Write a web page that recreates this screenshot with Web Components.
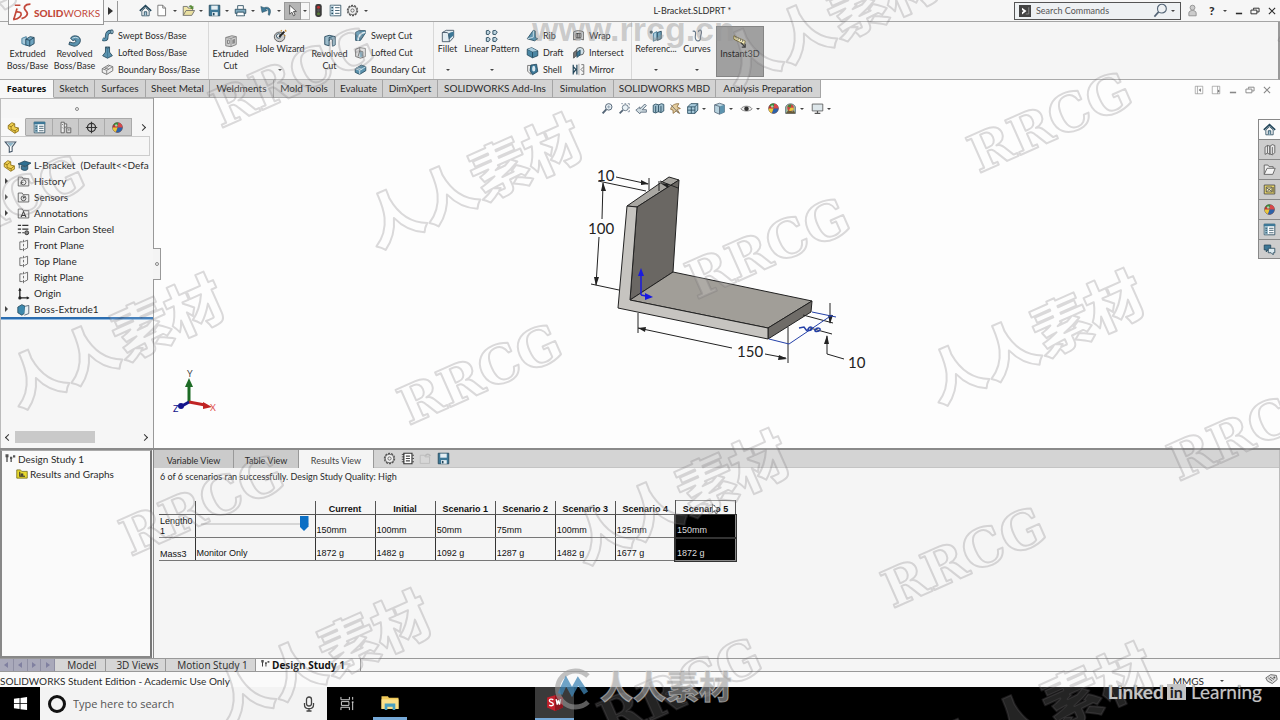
<!DOCTYPE html>
<html lang="en">
<head>
<meta charset="utf-8">
<title>L-Bracket.SLDPRT - SOLIDWORKS</title>
<style>
html,body{margin:0;height:100%}
body{font-family:Lato,"Noto Sans CJK SC",sans-serif;font-size:10px;color:#2b2b2b;background:#f5f5f5}
</style>
</head>
<body>
<sw-app></sw-app>
<script>
const BASE=`*{box-sizing:border-box}button{font:inherit;color:inherit;background:none;border:0;padding:0;margin:0}sw-icon{flex:none}`;
function define(name,css,html){
  const t=document.createElement('template');
  t.innerHTML=`<style>${BASE}${css}</style>${html}`;
  customElements.define(name,class extends HTMLElement{
    constructor(){super();this.attachShadow({mode:'open'}).append(t.content.cloneNode(true));}
  });
}

/* ---------- icons, all on a 16 unit grid ---------- */
const B='#3d7897',D='#23465a',L='#a9cbdc',G='#666';
const ball='<circle cx="8" cy="8" r="6" fill="#c33" stroke="#444" stroke-width=".8"/><path d="M8 8L3 4A6 6 0 0 1 9 2z" fill="#3a8a3a"/><path d="M8 8L9 2A6 6 0 0 1 14 8z" fill="#d8484a"/><path d="M8 8H14A6 6 0 0 1 6 13.6z" fill="#2c62a8"/><path d="M8 8L6 13.6A6 6 0 0 1 2 8z" fill="#e8c93c"/><circle cx="6.4" cy="5.4" r="1.5" fill="#fff" opacity=".6"/>';
const folder=`<path d="M1.500 13.500v-11h5l1 2h7v9z" fill="#eee" stroke="#555"/>`;
const plane=`<path d="M7 3.500H3.500v9.500H7M9 3l4-1.500v9.500L9 13" fill="none" stroke="#555"/><path d="M8 1v3M8 6v3M8 11v4" fill="none" stroke="#555"/>`;
const ICONS={
home:`<path d="M1 8.500L8 2l7 6.500" fill="none" stroke="${D}" stroke-width="2"/><path d="M3.500 8.500V14.500h9V8.500L8 4.500z" fill="#f5f5f5" stroke="${D}"/><path d="M6.500 14V9.500h3V14" fill="${L}" stroke="${D}"/>`,
page:`<path d="M3.500 1.500h6l3.500 3.500v9.500h-9.500z" fill="#fff" stroke="#666"/><path d="M9.500 1.500V5H13" fill="none" stroke="#666"/>`,
open:`<path d="M1.500 14V3h5l1 2H13v3" fill="#f0e6a8" stroke="#666"/><path d="M1.500 14L5 8h10.500L12 14z" fill="#e9dfa0" stroke="#666"/><path d="M8 4c1-3 4-3 5-1l1-1v4h-4l1-1c-1-2-2-2-3-1z" fill="#5a8c3a"/>`,
save:`<path d="M1.500 1.500h13v13h-13z" fill="${B}" stroke="${D}"/><path d="M4 2h8v5H4z" fill="#e4eef3"/><path d="M5 10h7v4.500H5z" fill="#e4eef3"/><path d="M6 11h2v3H6z" fill="${D}"/>`,
print:`<path d="M4.500 6V2h7v4" fill="#fff" stroke="${D}"/><path d="M1.500 6.500h13v5h-13z" fill="#7fa9bd" stroke="${D}"/><path d="M4 10h8l1 4.500H3z" fill="#fff" stroke="${D}"/>`,
undo:`<path d="M1 3l1.500 7.500L9 8 6.500 6.500C9 5 11.500 7 10 13l1.500 1C15 8 12 2 5 4.500z" fill="${B}" stroke="${D}" stroke-width=".6"/>`,
cursor:`<path d="M4.500 1.500v11l2.700-2.500 2 4.500 2-1-2-4.300h3.600z" fill="#fff" stroke="#444"/>`,
traffic:`<rect x="4" y="0" width="8" height="16" rx="3" fill="#3b3b3b"/><circle cx="8" cy="4" r="1.900" fill="#b33"/><circle cx="8" cy="8" r="1.700" fill="#555"/><circle cx="8" cy="12" r="1.900" fill="#587a3a"/>`,
list:`<path d="M1.500 1.500h13v13h-13z" fill="#fff" stroke="${D}"/><path d="M2 2h4v12H2z" fill="#b8d2df"/><path d="M3 4.500h2M3 8h2M3 11.500h2" stroke="${D}" stroke-width="1.500"/><path d="M7.500 4.500H13M7.500 8H13M7.500 11.500H13" stroke="${D}"/>`,
tlist:`<path d="M1.500 1.500h13v13h-13z" fill="#fff" stroke="${D}"/><path d="M1 1h14v3H1z" fill="${B}"/><path d="M2 4h4v10H2z" fill="#8fb6c8"/><path d="M3 6.500h2M3 9h2M3 12h2M7.500 6.500H13M7.500 9H13M7.500 12H13" stroke="${D}"/>`,
gear:`<circle cx="8" cy="8" r="6.200" fill="none" stroke="#555" stroke-width="1.600" stroke-dasharray="2.600 1.200"/><circle cx="8" cy="8" r="5" fill="#f2f2f2" stroke="#555"/><circle cx="8" cy="8" r="2" fill="none" stroke="#555"/>`,
extrude:`<path d="M1 5l5-2v10l-5-2z" fill="${L}" stroke="${B}"/><path d="M5.500 6l5-3 4.500 1v7l-5 3-4.500-1.500z" fill="#6ea4bf" stroke="${D}"/><path d="M5.500 6l4.500 1.200 5-3.200M10 7.200V14" fill="none" stroke="${D}"/>`,
revolve:`<path d="M3 5c1-4 10-4 11 1 1 4-3 8-7 8l-6-2 1-3c4 2 7 1 7-1s-3-1-3 0z" fill="#5c93ae" stroke="${D}"/><path d="M5 5c2-1.500 5-1.500 7 0" fill="none" stroke="#d4e6ee"/>`,
sweep:`<path d="M2 12.500c5 1.500 5-1 5-4s2-6 7-5" fill="none" stroke="${D}" stroke-width="4.500"/><path d="M2 12.500c5 1.500 5-1 5-4s2-6 7-5" fill="none" stroke="#5c93ae" stroke-width="2.800"/><ellipse cx="13.500" cy="3.500" rx="1.500" ry="2.500" fill="${L}" stroke="${D}"/>`,
loft:`<path d="M5.500 1.500h5v6L14 12l-6 3-6-3 3.500-4.500z" fill="#5c93ae" stroke="${D}"/><path d="M5.500 1.500L8 3l2.500-1.500z" fill="${L}" stroke="${D}"/><path d="M8 3v12" fill="none" stroke="#3d7897"/>`,
boundary:`<path d="M1.500 7L9 2.500l5.500 2v5L7 14l-5.500-2.500z" fill="#eee" stroke="#666"/><path d="M1.500 7L7 9l7.500-4.500M7 9v5M4 5.500l6 2.500M11 3l-7 5" fill="none" stroke="#777"/>`,
boundaryb:`<path d="M1.500 7L9 2.500l5.500 2v5L7 14l-5.500-2.500z" fill="#5c93ae" stroke="${D}"/><path d="M1.500 7L7 9l7.500-4.500M7 9v5M4 6l6 2" fill="none" stroke="#dceaf0"/>`,
cut:`<path d="M2 4l7-2 5 1v9l-6 2.500-6-1z" fill="#d3d3d3" stroke="#777"/><path d="M2 4l6 1 6-2M8 5v9.500" fill="none" stroke="#888"/><path d="M9.500 6.500l3-1v5l-3 1z" fill="#888"/><path d="M4 7h2v4H4z" fill="#eee" stroke="#777"/>`,
hole:`<ellipse cx="7.500" cy="9" rx="6" ry="5.500" fill="#ccc" stroke="#555"/><ellipse cx="6.500" cy="8" rx="2.500" ry="2.500" fill="#fff" stroke="${D}"/><path d="M7 9l6-6" stroke="#222" stroke-width="2.200"/><path d="M9 1.500l1 1M13 7l1 1M14 1l1 2" stroke="#c78a2a" stroke-width="1.500"/>`,
rcut:`<path d="M2 3l5-1.500 7 1.500v9.500L11 14V8c0-3-4-3-4 0v5.500L2 12z" fill="#9dbccb" stroke="${D}"/><path d="M7 8V4l4-1" fill="none" stroke="${D}"/>`,
scut:`<path d="M2 4l4-2h8v3L8 14H2z" fill="#5c93ae" stroke="${D}"/><path d="M5 14C5 8 8 5 14 4" fill="none" stroke="#e4eff4" stroke-width="2"/>`,
lcut:`<path d="M2 4l5-2 7 1v10l-6 2-6-2z" fill="#ddd" stroke="#666"/><path d="M7 6l4 1v6l-4 1z" fill="#8fb6c8"/><path d="M7 2v4l-2 7M7 6l4 1v6" fill="none" stroke="#666"/>`,
fillet:`<path d="M1.500 4L6 1.500h8.500v8L10 14.500H1.500z" fill="#e2ecf1" stroke="#456"/><path d="M8 7c0-2 2-3.500 6.500-4v4L9 12z" fill="${B}"/><path d="M1.500 4H7c2 1 2.500 3 2.500 10.500" fill="none" stroke="#456"/>`,
pattern:`<g fill="#bcd2dd" stroke="${D}"><path d="M1.500 2L4 1.500 6 3.500 4 6.500 1.500 6zM9 2l3-.5 2 2-2 3L9 6zM1.500 10l2.500-.5 2 2-2 3-2.500-.5zM9 10l3-.5 2 2-2 3L9 14z"/></g>`,
rib:`<path d="M1.500 12L9 1.500l2.500 1v8l3 1.500-4 2.500z" fill="#5c93ae" stroke="${D}"/><path d="M9 2v8l-7 2" fill="none" stroke="#dceaf0"/>`,
draft:`<path d="M1.500 4L7 2l7.500 4v6L8 14.500 1.500 11z" fill="#4a86a3" stroke="${D}"/><path d="M1.500 4L8 7l6.500-1M8 7v7.500" fill="none" stroke="${D}"/><path d="M2 4l5-2 7 4-6 1z" fill="${L}"/>`,
shell:`<path d="M2 3h4v11L2 10z" fill="#eee" stroke="#666"/><path d="M6 2.500l7-1 1.500 9L8 14.500 5 9z" fill="${B}" stroke="${D}"/><ellipse cx="9.500" cy="7" rx="2" ry="3.500" fill="#d9e8ef"/>`,
wrap:`<path d="M2 3.500c4-2 8-2 12 0v10c-4-2-8-2-12 0z" fill="#ddd" stroke="#555"/><path d="M5 5.500h6v5H5z" fill="none" stroke="#333"/><path d="M7 5v6M9 5v6" stroke="#333"/>`,
intersect:`<circle cx="10" cy="6.500" r="4.800" fill="#cfdfe7" stroke="#555"/><path d="M2 8l4-3v6l-4 4z" fill="#777" stroke="#444"/><path d="M6 8l4-3v6l-4 3z" fill="${B}" stroke="${D}"/>`,
mirror:`<path d="M1.500 2v12M1.500 4.500L5 8l-3.500 4M6 2v12" fill="none" stroke="${D}" stroke-width="1.500"/><path d="M8.500 1v14" stroke="#999"/><path d="M14.500 2v12h-3M14.500 2h-3M14 5l-3 3 3 3" fill="none" stroke="#777" stroke-width="1.200"/>`,
ref:`<path d="M5 5l4-2v9l-4 2z" fill="${L}" stroke="${B}"/><path d="M9.500 4L14 2.500V11l-4.500 2z" fill="#6ea4bf" stroke="${D}"/><circle cx="2.500" cy="3.500" r="1.800" fill="${D}"/>`,
curves:`<path d="M3 2.500c5-1 3 4 3 7 0 6 7 5 6 0-1-2 2-3 1-7-1-2-4-1-3 1" fill="none" stroke="#678" stroke-width="1.300"/>`,
instant:`<path d="M1 2l13 6-1 4L1 6z" fill="#f1e7ae" stroke="#6b6030"/><path d="M3.500 3v2M6 4v2.500M8.500 5.500V8M11 6.500V9" stroke="#555"/><path d="M9 10l5 5M14 11v4h-4" fill="none" stroke="#222" stroke-width="1.300"/>`,
zoomfit:`<circle cx="9.500" cy="6" r="4" fill="#eaf2f6" stroke="#567" stroke-width="1.200"/><path d="M6.500 9L2 14" stroke="#567" stroke-width="2.400"/><path d="M7.500 6h4M9.500 4v4" stroke="#89a"/>`,
zoomarea:`<path d="M4 2h2M8 2h2M12 2h2v2M14 6v2M14 10v2h-2" fill="none" stroke="#789"/><circle cx="9" cy="7" r="3.700" fill="#eaf2f6" stroke="#567"/><path d="M6 10l-4 4" stroke="#567" stroke-width="2.200"/>`,
prev:`<path d="M1 10l5-4v2.500l6-6 2 2-5 5h5v3H7l-1 2z" fill="#cfdbe1" stroke="#567"/>`,
section:`<path d="M1.500 4l3-1.500 4 1 3-1.500 3 1v8l-3 2-4-1-3 1.500-3-1z" fill="#9dbccb" stroke="${D}"/><path d="M4.500 5v8M8 4v8M11 5v8" stroke="${D}"/>`,
orient:`<path d="M2 9c1-5 5-7 10-7l-2 4 4 2-4 1 3 5-4-3-4 3v-4z" fill="#e6cfa0" stroke="#8a6a3a"/><path d="M2 3l10 11" stroke="#666"/>`,
cube:`<path d="M2 6l4-4h8.500v8L11 14H2z" fill="#a9cbdc" stroke="${D}"/><path d="M2 6h9l3.500-4M11 6v8M6.500 6v8M2 10h9" fill="none" stroke="${D}"/>`,
shade:`<path d="M2 3.500L8 1.500l6 2v9l-6 2.500-6-2.500z" fill="#b9d3df" stroke="#567"/><path d="M8 5.500l6-2v9L8 15z" fill="#5c93ae"/><path d="M2 3.500l6 2v9.500" fill="none" stroke="#567"/>`,
eye:`<path d="M1 8.500C4 4 12 4 15 8.500 12 12 4 12 1 8.500z" fill="#eee" stroke="#777"/><circle cx="8" cy="8.300" r="2.800" fill="#333"/>`,
ball, ballbg:`<path d="M2 14V6c2-5 10-5 12 0v8z" fill="#9fc1a0" stroke="#567"/><path d="M2 14l5-6 3 4 2-2 2 4z" fill="#6a5a3a"/><circle cx="8" cy="7" r="4" fill="#c44"/><path d="M8 7L4.500 5.500A4 4 0 0 1 9 3.200z" fill="#3a8a3a"/><path d="M8 7h4A4 4 0 0 1 6 10.500z" fill="#e8c93c"/>`,
monitor:`<path d="M1.500 2.500h13v8.500h-13z" fill="#dde6ea" stroke="#555"/><path d="M8 11v3M4.500 14h7" stroke="#555" stroke-width="1.500"/>`,
books:`<path d="M2.500 5l3-2v9.500l-3 1.500zM5.500 3l3 .8V14l-3-1.500M8.500 4l3-2 3 1v9l-3 2.500-3-1z" fill="#e8e8e8" stroke="#555"/><path d="M11.500 5v9" stroke="#555"/>`,
ofolder:`<path d="M1.500 14V2.500h4.500l1.500 2h5v2" fill="#eee" stroke="#555"/><path d="M1.500 14L5 6.500h10L12 14z" fill="#f4f4f4" stroke="#555"/>`,
palette:`<path d="M1.500 2.500h13v11h-13z" fill="#e8d56a" stroke="#444"/><path d="M4 5h7v6H4z" fill="#fff7b8" stroke="#444"/><path d="M4.500 6l6 4M10 5.500l-5 5M12.500 5v7" stroke="#444"/>`,
forum:`<path d="M1.500 2.500h8v6H6l-2 2.500V8.500H1.500z" fill="${B}" stroke="${D}"/><path d="M6.500 6.500h8v5.500h-2v2.500L10 12H6.500z" fill="#dceaf0" stroke="${D}"/>`,
part:`<path d="M1.500 5.500L6 2l3.500 1.500v4l4.500 1v4L9.500 15 1.500 9.500z" fill="#f0d050" stroke="#8a6d13"/><path d="M1.500 5.500L5 7l4.500-3.500M5 7v3.500l5 1.500 4-3.500M10 12v3" fill="none" stroke="#8a6d13"/>`,
config:`<path d="M2.500 1.500h4v13h-4zM6.500 3.500h3v4h-3" fill="#eee" stroke="#555"/><path d="M9.500 8.500h5v6h-5z" fill="#ddd" stroke="#555"/><path d="M4 4l1 1M4 8l1 1M11 11h2" stroke="#444"/>`,
target:`<circle cx="8" cy="8" r="5" fill="none" stroke="#333" stroke-width="1.600"/><path d="M8 1v14M1 8h14" stroke="#333" stroke-width="1.400"/>`,
funnel:`<path d="M1.500 2.500h13L10 8.500v5.500L6.500 15V8.500z" fill="#fff" stroke="#456" stroke-width="1.300"/><path d="M3.500 3.500h9L8 8z" fill="#8fb6c8"/>`,
cap:`<path d="M0 6l8-3.500L16 5l-7 4z" fill="#2d6f92" stroke="${D}"/><path d="M4 8.500v4c3 2 6 2 8 0v-5l-3 2z" fill="${B}" stroke="${D}"/><path d="M1.500 6.500v5" stroke="${D}"/>`,
history:folder+`<circle cx="8" cy="9" r="3" fill="none" stroke="#444"/><path d="M5 12V9h3" fill="none" stroke="#444"/>`,
sensors:folder+`<circle cx="8" cy="9" r="3" fill="#ddd" stroke="#444"/><path d="M8 9l2-2M8 7v2" stroke="#333"/>`,
annot:folder+`<path d="M5 12.500L8 5.500l3 7M6 10.500h4" fill="none" stroke="#333" stroke-width="1.300"/>`,
steel:`<path d="M1 3h4M6.500 3H14M1 7.500h4M6.500 7.500H14M1 12h4M6.500 12H9" stroke="#333" stroke-width="1.500"/><circle cx="12" cy="12" r="2.400" fill="#888" stroke="#222"/>`,
plane,
origin:`<path d="M3.500 2v11.500H14" fill="none" stroke="#222" stroke-width="1.600"/><path d="M3.500 1L1.500 4.500h4zM15.500 13.500L12 11.500v4z" fill="#222"/><circle cx="3.500" cy="13.500" r="2" fill="#222"/>`,
boss:`<path d="M1 5l5-3 4 2v8l-4 3-5-3z" fill="#3d88ad" stroke="${D}"/><path d="M10 4l4.500-1v10L9 15" fill="#e8f0f4" stroke="#456"/>`,
study:`<path d="M2 1.500h4v4H2zM8 5h3v3H8zM12 3h3v3h-3z" fill="#555"/><path d="M4 5v7M9.500 8v4" stroke="#333" stroke-width="1.500"/>`,
results:`<path d="M1 13.500v-11h5l1.500 2H15v9z" fill="#e8d92e" stroke="#6b6410"/><path d="M5 5v6h7M7 11V8h2v3" fill="none" stroke="#333" stroke-width="1.400"/>`,
notes:`<path d="M3.500 1.500h10v13h-10z" fill="#fff" stroke="#333" stroke-width="1.400"/><path d="M6 5h5M6 8h5M6 11h5" stroke="#444" stroke-width="1.500"/><path d="M1 3h3M1 6h3M1 9h3M1 12h3M14 4h2M14 8h2M14 12h2" stroke="#333"/>`,
faded:`<g opacity=".35"><path d="M1.500 14V4h5l1 2H13v8z" fill="#ddd" stroke="#888"/><path d="M8 5c1-3 4-3 6 0" fill="none" stroke="#888" stroke-width="2"/></g>`,
cmd:`<path d="M0 0h16v16H0z" fill="#444"/><path d="M4 3.500L10 8l-6 4.500V9.500L6 8 4 6.500z" fill="#fff"/><path d="M9 12h4V3" stroke="#999" fill="none"/>`,
lens:`<circle cx="9.500" cy="6" r="4.700" fill="none" stroke="#567" stroke-width="1.200"/><path d="M6 9.500L1.500 14.500" stroke="#567" stroke-width="1.800"/>`,
user:`<circle cx="8" cy="4.500" r="3" fill="#ccc" stroke="#888"/><path d="M3.500 14.500V11c0-4 9-4 9 0v3.500z" fill="#ccc" stroke="#888"/>`,
min:`<path d="M3 12h10" stroke="currentColor" stroke-width="2.500"/>`,
restore:`<path d="M5.500 6V3.500h9v6H11M1.500 6.500h9.500v6H1.500z" fill="none" stroke="currentColor" stroke-width="1.500"/>`,
close:`<path d="M3 3l10 10M13 3L3 13" stroke="currentColor" stroke-width="1.700"/>`,
dockl:`<path d="M2 2h12v12H2z" fill="none" stroke="#888"/><path d="M5.500 2v12" stroke="#888"/><path d="M11 5L7.500 8l3.500 3z" fill="#777"/>`,
dockr:`<path d="M2 2h12v12H2z" fill="none" stroke="#888"/><path d="M10.500 2v12" stroke="#888"/><path d="M11 7l3 2.500-3 3z" fill="#777"/>`,
tag:`<path d="M1 6l6-4 7 1 1 5-6 5-6-3z" fill="#ddd" stroke="#555"/><path d="M4 6l5 4M6 5l5 3" stroke="#555"/><circle cx="11.500" cy="5.500" r="1.200" fill="#555"/>`,
win:`<path d="M1 3l6-.9V7.600H1zM8 2l7-1v6.600H8zM1 8.500h6v5.400L1 13zM8 8.500h7V15l-7-1z" fill="#fff"/>`,
mic:`<rect x="5.500" y="1" width="5" height="9" rx="2.500" fill="none" stroke="#444" stroke-width="1.300"/><path d="M3.500 7v2c0 5 9 5 9 0V7M8 12.500V15M5.500 15h5" fill="none" stroke="#444" stroke-width="1.300"/>`,
taskview:`<path d="M1 1v3h9V1M1 15v-3h9v3M1.500 6h8v4h-8zM13.500 1v3M13.500 6v9M12.500 6.500h2" fill="none" stroke="#ddd"/>`,
explorer:`<path d="M0 2h6l1 1.500h9V14H0z" fill="#f0c95a"/><path d="M0 5h16v9H0z" fill="#fbe08a"/><path d="M3 9h10v6h-2.500v-3h-5v3H3z" fill="#49a0c0"/>`,
swapp:`<path d="M1 3l7-2 7 2v9l-7 3-7-3z" fill="#c4202c"/><path d="M8 1l7 2v9l-7 3z" fill="#8d1620"/><path d="M6.500 5.200C5 4 3 4.500 3 6s3.500 1.500 3.500 3-2 2-3.700.8M9 4.500l1 5 1-4 1 4 1-5" fill="none" stroke="#fff" stroke-width="1.200"/>`
};
customElements.define('sw-icon',class extends HTMLElement{
  connectedCallback(){
    if(this.shadowRoot)return;
    this.attachShadow({mode:'open'}).innerHTML=`<style>:host{display:block;width:13px;height:13px}svg{display:block;width:100%;height:100%}</style><svg viewBox="0 0 16 16" aria-hidden="true">${ICONS[this.getAttribute('name')]||''}</svg>`;
  }
});
define('sw-caret',`:host{display:flex;width:10px;justify-content:center;align-items:center;flex:none}i{border:2px solid transparent;border-top-color:#444;border-bottom:0}`,`<i></i>`);

/* ---------- title bar ---------- */
define('sw-titlebar',`
:host{display:flex;height:22px;background:#f6f6f6;border-bottom:1px solid #a5a5a5;align-items:center;position:relative;z-index:2}
.left{display:flex;align-items:center;width:371px;height:22px;flex:none}
.logo{display:flex;align-items:center;gap:2px;width:96px;height:25px;margin:0 0 0 8px;align-self:flex-start;background:#fbfbfb;border:1px solid #999;border-top:0;padding:2px 2px 0;color:#c2483a;font-size:10px}
.logo b{font-weight:900}.logo svg{width:21px;height:19px;flex:none}
.play{width:14px;height:20px;margin-right:19px;border-right:1px solid #999;display:flex;align-items:center;justify-content:center;flex:none}
.play i{border:4px solid transparent;border-left:5px solid #333;border-right:0}
.t{width:16px;height:18px;display:flex;justify-content:center;align-items:center;flex:none}
.t sw-icon{width:13px;height:13px}
.sel{width:17px;background:#b5b5b5;border:1px solid #999}
.selc{height:18px;border:1px solid #bbb;border-left:0;width:9px}
.w17{width:17px}
.title{flex:1;text-align:center;font-size:9px}
.right{display:flex;align-items:center;width:266px;flex:none}
form{display:flex;align-items:center;width:168px;height:18px;border:1px solid #555;background:#eef1f3;padding:0 2px 0 4px;margin:0}
form sw-icon{width:12px;height:12px}form .lens{width:15px;height:15px}
input{flex:1;min-width:0;border:0;background:none;outline:0;font:9px Lato,sans-serif;color:#444;padding:0 5px}
input::placeholder{color:#555;opacity:1}
.q{width:18px;text-align:center;font-weight:900;font-size:12px}
.w{width:17px;display:flex;justify-content:center}.w sw-icon{width:10px;height:10px}`,
`<div class="left"><div class="logo"><svg viewBox="0 0 18 17" fill="none" stroke="#c2483a" stroke-width="1.500"><path d="M3 2l5 0M1.500 15c6-1 8-4 7-6-1-1.500-3-1-4.500-1M5 5L2 15M17 1c-5 0-7 3-4 6 3 3 0 6-4 7"/></svg><span><b>SOLID</b>WORKS</span></div>
<button class="play" aria-label="Show menus"><i></i></button>
<button class="t" aria-label="Home"><sw-icon name="home"></sw-icon></button>
<button class="t w17" aria-label="New"><sw-icon name="page"></sw-icon></button><sw-caret></sw-caret>
<button class="t" aria-label="Open"><sw-icon name="open"></sw-icon></button><sw-caret></sw-caret>
<button class="t" aria-label="Save"><sw-icon name="save"></sw-icon></button><sw-caret></sw-caret>
<button class="t" aria-label="Print"><sw-icon name="print"></sw-icon></button><sw-caret></sw-caret>
<button class="t" aria-label="Undo"><sw-icon name="undo"></sw-icon></button><sw-caret></sw-caret>
<button class="t sel" aria-label="Select"><sw-icon name="cursor"></sw-icon></button><sw-caret class="selc"></sw-caret>
<button class="t w17" aria-label="Rebuild"><sw-icon name="traffic"></sw-icon></button>
<button class="t w17" aria-label="File properties"><sw-icon name="list"></sw-icon></button>
<button class="t w17" aria-label="Options"><sw-icon name="gear"></sw-icon></button><sw-caret></sw-caret></div>
<div class="title">L-Bracket.SLDPRT *</div>
<div class="right"><form><sw-icon name="cmd"></sw-icon><input type="text" aria-label="Search Commands" placeholder="Search Commands"><sw-icon class="lens" name="lens"></sw-icon><sw-caret></sw-caret></form>
<button class="t w17" style="width:22px" aria-label="Account"><sw-icon name="user"></sw-icon></button><button class="q">?</button><sw-caret></sw-caret>
<button class="w" aria-label="Minimize"><sw-icon name="min"></sw-icon></button><button class="w" aria-label="Restore"><sw-icon name="restore"></sw-icon></button><button class="w" aria-label="Close"><sw-icon name="close"></sw-icon></button></div>`);

/* ---------- ribbon ---------- */
define('sw-big',`:host{display:block;width:47px;flex:none}
button{display:flex;flex-direction:column;align-items:center;width:100%;height:100%;padding-top:12px;line-height:12px;font-size:9px;text-align:center;white-space:nowrap}
:host([menu]) button{padding-top:7px}
sw-caret{display:none}:host([menu]) sw-caret{display:flex;margin-top:14px}
::slotted(sw-icon){width:14px;height:14px}`,
`<button><slot name="icon"></slot><slot></slot><sw-caret></sw-caret></button>`);
define('sw-small',`:host{display:block}button{display:flex;align-items:center;gap:4px;height:17px;font-size:9px;white-space:nowrap}`,
`<button><slot name="icon"></slot><span><slot></slot></span></button>`);
const big=(ic,label,w,menu='')=>`<sw-big style="width:${w}px" ${menu}><sw-icon slot="icon" name="${ic}"></sw-icon><span>${label}</span></sw-big>`;
const small=(ic,label)=>`<sw-small><sw-icon slot="icon" name="${ic}"></sw-icon>${label}</sw-small>`;
define('sw-ribbon',`:host{display:flex;height:58px;background:#f5f5f5;border-bottom:1px solid #aaa;border-right:2px solid #999;padding-left:4px}
section{display:flex;border-right:1px solid #d8d8d8;flex:none}
.col{padding:5px 7px 0 3px}.c1{width:110px}.c2{width:82px}.c3{width:46px}.c4{width:62px}
.on{background:#a0a0a0;border:1px solid #858585;margin:4px 0 2px 2px;display:flex}
.on sw-big{margin-top:-5px}
section:last-child{border:0}`,
`<section>${big('extrude','Extruded<br>Boss/Base',47)}${big('revolve','Revolved<br>Boss/Base',47)}
<div class="col c1">${small('sweep','Swept Boss/Base')}${small('loft','Lofted Boss/Base')}${small('boundary','Boundary Boss/Base')}</div></section>
<section>${big('cut','Extruded<br>Cut',43)}${big('hole','Hole Wizard',56,'menu')}${big('rcut','Revolved<br>Cut',43)}
<div class="col c2">${small('scut','Swept Cut')}${small('lcut','Lofted Cut')}${small('boundaryb','Boundary Cut')}</div></section>
<section>${big('fillet','Fillet',27,'menu')}${big('pattern','Linear Pattern',62,'menu')}
<div class="col c3">${small('rib','Rib')}${small('draft','Draft')}${small('shell','Shell')}</div>
<div class="col c4">${small('wrap','Wrap')}${small('intersect','Intersect')}${small('mirror','Mirror')}</div></section>
<section>${big('ref','Referenc...',48,'menu')}${big('curves','Curves',34,'menu')}<div class="on">${big('instant','Instant3D',46)}</div></section>`);

/* ---------- command manager tabs ---------- */
const tabs=[['Features',54],['Sketch',41],['Surfaces',51],['Sheet Metal',64],['Weldments',64],['Mold Tools',61],['Evaluate',48],['DimXpert',55],['SOLIDWORKS Add-Ins',115],['Simulation',61],['SOLIDWORKS MBD',102],['Analysis Preparation',105]];
define('sw-tabs',`:host{display:flex;height:18px;background:#fdfdfd}
nav{display:flex}button{height:18px;background:#d3d3d3;border-right:1px solid #a5a5a5;border-bottom:1px solid #aaa;line-height:17px;white-space:nowrap}
button:first-child{background:#f8f8f8;border-bottom-color:#f8f8f8;font:bold 9px/17px "Open Sans",sans-serif;color:#111}
.win{margin-left:auto;display:flex;align-items:center;padding:2px 5px 0 0;color:#888}
.win i{width:17px;display:flex;justify-content:center}.win sw-icon{width:10px;height:10px}`,
`<nav>${tabs.map(([t,w])=>`<button style="width:${w}px">${t}</button>`).join('')}</nav>
<div class="win">${['dockl','dockr','min','restore','close'].map(n=>`<i><sw-icon name="${n}"></sw-icon></i>`).join('')}</div>`);

/* ---------- feature tree ---------- */
define('sw-node',`:host{display:flex;align-items:center;height:16px;padding-left:4px;white-space:nowrap;overflow:hidden}
i{width:12px;flex:none}i::before{content:"";display:none;border:3px solid transparent;border-left:3px solid #444;border-right:0;width:0}
:host([open]) i::before{display:block}span{padding-left:4px}:host([root]){padding-left:2px}:host([root]) i{display:none}:host([root]) span{padding-left:3px;white-space:pre}`,
`<i></i><slot name="icon"></slot><span><slot></slot></span>`);
const node=(ic,t,a='')=>`<sw-node role="treeitem" ${a}><sw-icon slot="icon" name="${ic}"></sw-icon>${t}</sw-node>`;
define('sw-tree',`:host{display:flex;flex-direction:column;width:154px;flex:none;background:#f6f6f6;border-right:1px solid #999;border-left:1px solid #bbb;position:relative}
.grip{height:20px;display:flex;justify-content:center;align-items:center;border-top:1px solid #bbb}
.dot{width:4px;height:4px;border:1px solid #888;border-radius:50%}
.tabs{display:flex;height:18px}.tabs button{width:27px;background:#cbcbcb;border:1px solid #aaa;border-left:0;display:flex;align-items:center;justify-content:center}
.tabs button:first-child{background:#f8f8f8;border-color:#f8f8f8;border-right-color:#aaa;width:26px}
.tabs button:last-child{background:none;border:0;width:22px}
.ar{width:5px;height:5px;border:solid #333;border-width:1px 1px 0 0;rotate:45deg;flex:none}.ar.l{rotate:-135deg}
.filter{height:20px;border:1px solid #ccc;border-left:0;margin-right:3px;padding:3px;display:flex}
.filter input{border:0;background:none;flex:1;min-width:0;outline:0}
.list{padding-top:1px}.bar{height:3px;background:#2b6db0;border-bottom:1px solid #8fb8e0}
.scroll{margin-top:auto;display:flex;height:12px;align-items:center;margin-bottom:5px;padding:0 6px 0 5px;gap:4px}
.scroll div{width:80px;height:12px;background:#c9c9c9;margin-right:auto}
.split{position:absolute;left:152px;top:150px;width:8px;height:32px;background:#f4f4f4;border:1px solid #999;border-left:0;display:flex;align-items:center;justify-content:center;z-index:1}`,
`<div class="grip"><span class="dot"></span></div>
<div class="tabs"><button aria-label="Feature tree"><sw-icon name="part"></sw-icon></button><button aria-label="Properties"><sw-icon name="tlist"></sw-icon></button><button aria-label="Configurations"><sw-icon name="config"></sw-icon></button><button aria-label="DimXpert"><sw-icon name="target"></sw-icon></button><button aria-label="Display"><sw-icon name="ball"></sw-icon></button><button aria-label="More"><i class="ar"></i></button></div>
<label class="filter"><sw-icon name="funnel"></sw-icon><input type="text" aria-label="Filter tree"></label>
<div class="list" role="tree">
<sw-node root role="treeitem"><sw-icon slot="icon" name="part"></sw-icon><sw-icon slot="icon" name="cap" style="margin-left:2px"></sw-icon>L-Bracket&nbsp; (Default&lt;&lt;Defa</sw-node>
${node('history','History','open')}${node('sensors','Sensors','open')}${node('annot','Annotations','open')}${node('steel','Plain Carbon Steel')}${node('plane','Front Plane')}${node('plane','Top Plane')}${node('plane','Right Plane')}${node('origin','Origin')}${node('boss','Boss-Extrude1','open')}</div>
<div class="bar"></div>
<div class="scroll"><i class="ar l"></i><div></div><i class="ar"></i></div>
<div class="split"><span class="dot"></span></div>`);

/* ---------- graphics area ---------- */
define('sw-view',`:host{display:block;flex:1;min-width:0;position:relative;background:#fdfdfd}
.scene{position:absolute;inset:0;width:100%;height:100%}
.hud{position:relative;display:flex;justify-content:center;align-items:center;height:21px;gap:4px}
.hud span{display:flex;align-items:center}
.side{position:absolute;right:0;top:21px;width:22px;display:flex;flex-direction:column;border:1px solid #888;border-right:0}
.side button{height:20px;background:#cdcdcd;border-bottom:1px solid #888;display:flex;align-items:center;justify-content:center}
.side button:first-child{background:#fbfbfb}.side button:last-child{border:0;height:18px}
text{font-family:Lato,sans-serif}.dim text{font-family:"Liberation Sans Narrow",Lato,sans-serif}`,
`<svg class="scene" viewBox="154 98 1126 350" fill="none">
<g stroke="#222" stroke-width="1" stroke-linejoin="round">
<path d="M627 206L669 177L679 180L637 207z" fill="#a9a7a2"/>
<path d="M637 207L679 180L673 272L630 300z" fill="#6a6763"/>
<path d="M630 300L673 272L812 301L768 328z" fill="#a19e98"/>
<path d="M768 328L812 301L811 312L768 339z" fill="#6f6c68"/>
<path d="M627 206L637 207L630 300L768 328L768 339L618 308z" fill="#c6c4c0"/></g>
<g stroke="#222" stroke-width="1">
<path d="M616 177L648 184M649 178v12M598 181L646 191M660 181L678 188M659 181v10M603 183L602 219M599 237L596 285M591 284L619 290M638 313v20M638 328L732 348M765 354L786 358M788 327v36M803 315l30 8M830 303v20M810 328l22 6M827 336v18l17 5"/></g>
<g fill="#222"><path d="M649 184l-8-4v5zM660 183l9 1-1 4zM603 182l-2 9h5zM596 286l-2-9h5zM638 328l8-1-1 5zM787 359l-8-4-1 5zM830 324l-2-9h5zM827 335l-3 9h5z"/></g>
<g stroke="#2440a8"><path d="M769 339l20 5L832 315M812 312l24 5"/><path d="M799 328l5-1 3 4M808 329c2-3 5-2 4 0s-5 2-4 0M815 330c2-3 6-2 5 0s-6 2-5 0" stroke-width="1.500"/></g>
<g stroke="#1a1ae0" stroke-width="1.500"><path d="M641 295V272M641 295l10 2"/></g><g fill="#1a1ae0"><path d="M641 268l-3 8h6zM653 297l-8-4v7z"/></g>
<g class="dim" fill="#222" font-size="15"><text x="597" y="181">10</text><text x="588" y="234">100</text><text x="737" y="357">150</text><text x="848" y="368">10</text></g>
<path d="M189 403V386" stroke="#1d6b25" stroke-width="3"/><path d="M189 378l-4 9h8z" fill="#1d6b25"/>
<path d="M189 402l16 3" stroke="#c02424" stroke-width="3"/><path d="M212 407l-9-5v7z" fill="#c02424"/>
<path d="M189 402l-7 4" stroke="#15158c" stroke-width="3"/><circle cx="181" cy="406" r="3" fill="#15158c"/>
<g font-size="9"><text x="187" y="377" fill="#444">Y</text><text x="210" y="411" fill="#e05050">X</text><text x="173" y="412" fill="#15158c">Z</text></g>
</svg>
<div class="hud"><sw-icon name="zoomfit"></sw-icon><sw-icon name="zoomarea"></sw-icon><sw-icon name="prev"></sw-icon><sw-icon name="section"></sw-icon><sw-icon name="orient"></sw-icon>
<span><sw-icon name="cube"></sw-icon><sw-caret></sw-caret></span><span><sw-icon name="shade"></sw-icon><sw-caret></sw-caret></span><span><sw-icon name="eye"></sw-icon><sw-caret></sw-caret></span><sw-icon name="ball"></sw-icon><span><sw-icon name="ballbg"></sw-icon><sw-caret></sw-caret></span><span><sw-icon name="monitor"></sw-icon><sw-caret></sw-caret></span></div>
<div class="side">${['home','books','ofolder','palette','ball','tlist','forum'].map(n=>`<button aria-label="${n}"><sw-icon name="${n}"></sw-icon></button>`).join('')}</div>`);

/* ---------- design study ---------- */
const heads=['Current','Initial','Scenario 1','Scenario 2','Scenario 3','Scenario 4','Scenario 5'];
const len=['150mm','100mm','50mm','75mm','100mm','125mm','150mm'],mass=['1872 g','1482 g','1092 g','1287 g','1482 g','1677 g','1872 g'];
define('sw-study',`:host{display:flex;min-height:210px;border-top:2px solid #8a8a8a;background:#f5f5f5;gap:1px}
aside{width:152px;flex:none;background:#fafafa;border:2px solid #888;border-top:1px solid #aaa;border-right-color:#777;padding:0 2px}
aside div{display:flex;align-items:center;height:15px;gap:2px;white-space:nowrap}
aside .kid{padding-left:12px}
aside sw-icon{width:12px;height:12px}
main{flex:1;min-width:0;border-left:1px solid #888;border-right:1px solid #bbb}
.bar{display:flex;height:18px;background:#d4d4d4;align-items:stretch;border-bottom:1px solid #c4c4c4;gap:5px}
.bar nav{display:flex;margin-right:4px}.bar nav button{font-size:9px;border-right:1px solid #999;background:#cbcbcb;padding-top:4px;line-height:14px;margin-bottom:-1px}
.bar nav button:last-child{background:#f5f5f5;color:#444}
.bar>sw-icon{align-self:center}
p{margin:0;padding:3px 6px;font-size:9px;line-height:12px}
table{border-collapse:collapse;table-layout:fixed;width:577px;margin:14px 0 0 5px;font:9px/11px "Liberation Sans",Arial,sans-serif;color:#111}
th,td{border:1px solid #555;padding:0 1px;vertical-align:bottom;text-align:left;overflow:hidden}
tr>:first-child{border-left:0}thead th{border-top:0;height:14px;text-align:center;line-height:10px;vertical-align:bottom}
td,tbody th{height:23px;padding-bottom:1px;font-weight:normal;border-color:#777 #333}
tbody th{line-height:10px}
th.s1,td.s1{border-left:1px solid #000}
thead th:last-child{border-top:1px solid #888;position:relative;overflow:visible}
td:last-child{background:#000;color:#ddd;outline:1px solid #333;border-color:#888}
.ptr{position:absolute;left:33px;top:1px;width:12px;height:14px;z-index:1}
input{appearance:none;-webkit-appearance:none;display:block;width:108px;height:15px;margin:0 4px 5px;background:linear-gradient(#d6d6d6,#d6d6d6) 0 7px/100% 2px no-repeat}
input::-webkit-slider-thumb{-webkit-appearance:none;width:9px;height:15px;background:#0b6fc4;clip-path:polygon(0 0,100% 0,100% 70%,50% 100%,0 70%)}`,
`<aside><div><sw-icon name="study"></sw-icon>Design Study 1</div><div class="kid"><sw-icon name="results"></sw-icon>Results and Graphs</div></aside>
<main><div class="bar"><nav><button style="width:80px">Variable View</button><button style="width:65px">Table View</button><button style="width:75px">Results View</button></nav>
<sw-icon name="gear"></sw-icon><sw-icon name="notes"></sw-icon><sw-icon name="faded"></sw-icon><sw-icon name="save"></sw-icon></div>
<p>6 of 6 scenarios ran successfully. Design Study Quality: High</p>
<table><colgroup><col style="width:36px"><col style="width:120px">${heads.map(()=>'<col>').join('')}</colgroup>
<thead><tr><th></th><th></th>${heads.map((h,i)=>`<th class="${i==2?'s1':''}" scope="col">${h}${i==6?'<sw-icon class="ptr" name="cursor"></sw-icon>':''}</th>`).join('')}</tr></thead>
<tbody><tr><th scope="row">Length0<br>1</th><td><input type="range" min="50" max="150" value="150" step="25" aria-label="Length01"></td>${len.map((v,i)=>`<td class="${i==2?'s1':''}">${v}</td>`).join('')}</tr>
<tr><th scope="row">Mass3</th><td>Monitor Only</td>${mass.map((v,i)=>`<td class="${i==2?'s1':''}">${v}</td>`).join('')}</tr></tbody></table></main>`);

/* ---------- bottom tabs, status bar, taskbar ---------- */
define('sw-bottom',`:host{display:flex;height:14px;border-top:1px solid #999;border-bottom:1px solid #999;font:10px/13px "Open Sans",sans-serif}
.nav{display:flex;width:55px;background:#a9a9ba}.nav i{flex:1;border-right:1px solid #8f8fa4;display:flex;align-items:center;justify-content:center}
.nav i::before{content:"";border:3px solid transparent;border-left:4px solid #8080a0;border-right:0}.nav .b::before{rotate:180deg}
.tab{background:#d6d6d6;border-right:1px solid #999;white-space:nowrap;padding-left:4px}
.on{display:flex;gap:2px;background:#fafafa;font-weight:bold;color:#111}.on sw-icon{width:10px;height:10px}`,
`<div class="nav"><i class="b"></i><i class="b"></i><i></i><i></i></div><button class="tab" style="width:51px">Model</button><button class="tab" style="width:60px">3D Views</button><button class="tab" style="width:90px">Motion Study 1</button><button class="tab on" style="width:105px"><sw-icon name="study"></sw-icon>Design Study 1</button>`);
define('sw-status',`:host{display:flex;height:15px;align-items:center;background:#fafafa;padding-top:3px;line-height:12px}
.u{margin-left:auto;padding-right:13px}sw-caret{margin-right:38px}sw-icon{margin:-3px 2px 0 0}`,
`<span>SOLIDWORKS Student Edition - Academic Use Only</span><span class="u">MMGS</span><sw-caret></sw-caret><sw-icon name="tag"></sw-icon>`);
define('sw-taskbar',`:host{display:flex;height:33px;background:#000}
button{width:40px;display:flex;align-items:center;justify-content:center}
label{display:flex;align-items:center;width:287px;background:#f3f3f3;padding:0 10px 0 8px}
.ring{width:18px;height:18px;border:3px solid #111;border-radius:50%;flex:none}
input{flex:1;min-width:0;border:0;outline:0;background:none;font:11px "Open Sans",sans-serif;padding:0 7px}input::placeholder{color:#555;opacity:1}
label sw-icon{width:16px;height:16px}
.e{width:34px;margin-left:6px;border-bottom:3px solid #76a9d8}.e sw-icon{width:18px;height:17px}.sw{margin-left:128px;width:39px;background:#3a3a3a;border-bottom:2px solid #76a9d8}.sw sw-icon{width:20px;height:18px}`,
`<button aria-label="Start"><sw-icon name="win" style="width:15px;height:15px"></sw-icon></button><label><span class="ring"></span><input type="text" placeholder="Type here to search" aria-label="Type here to search"><sw-icon name="mic"></sw-icon></label>
<button aria-label="Task view"><sw-icon name="taskview" style="width:15px;height:15px"></sw-icon></button><button class="e" aria-label="File Explorer"><sw-icon name="explorer"></sw-icon></button><button class="sw" aria-label="SOLIDWORKS 2018"><sw-icon name="swapp"></sw-icon></button>`);

/* ---------- overlaid marks, free placement over the whole window ---------- */
const latin=[[480,374],[768,248],[1050,122],[202,505],[964,557],[1250,430],[680,688],[292,77],[3,205]];
const han=[[473,181],[115,341],[830,20],[680,497],[1035,337],[322,657],[1045,710],[1375,-25],[-92,23]];
define('sw-marks',`:host{position:absolute;inset:0;overflow:hidden;pointer-events:none;z-index:5}
svg{width:100%;height:100%;display:block}
.w text{fill:rgba(255,255,255,.14);stroke:rgba(110,105,110,.24);stroke-width:2px;text-anchor:middle;stroke-linejoin:round}
.l{font:bold 52px "DejaVu Serif",serif}.h{font:900 58px "Noto Sans CJK SC",sans-serif}
.brand{position:absolute;right:18px;bottom:16px;display:flex;align-items:center;gap:3px;color:#c4c4c4;font:19px/24px Lato,sans-serif;text-shadow:0 0 1px #555}
.brand i{font:bold 16px/16px Lato,sans-serif;background:#c4c4c4;color:#222;padding:0 3px;margin-right:2px;text-shadow:none}`,
`<svg><g class="w">${latin.map(([x,y])=>`<text class="l" transform="translate(${x} ${y}) rotate(-24)" y="18">RRCG</text>`).join('')}${han.map(([x,y])=>`<text class="h" transform="translate(${x} ${y}) rotate(-24)" y="22">人人素材</text>`).join('')}</g>
<text x="532" y="41" fill="rgba(150,150,150,.45)" font-family="Liberation Sans" font-weight="bold" font-size="34">www.rrcg.cn</text>
<path d="M588 676A18 18 0 1 0 588 702" fill="none" stroke="#999" stroke-opacity=".6" stroke-width="5"/>
<path d="M560 694l6-13 6 11 6-11 8 12" fill="none" stroke="#3f86b5" stroke-opacity=".75" stroke-width="5"/>
<text x="600" y="699" fill="rgba(160,160,160,.65)" stroke="rgba(235,235,235,.5)" font-family="Noto Sans CJK SC" font-weight="900" font-size="33">人人素材</text></svg>
<div class="brand"><b>Linked</b><i>in</i><span>Learning</span></div>`);

define('sw-app',`:host{display:flex;flex-direction:column;min-height:100vh;position:relative;overflow:hidden}
.work{display:flex;flex:1;min-height:340px}`,
`<sw-titlebar></sw-titlebar><sw-ribbon></sw-ribbon><sw-tabs></sw-tabs>
<div class="work"><sw-tree></sw-tree><sw-view></sw-view></div>
<sw-study></sw-study><sw-bottom></sw-bottom><sw-status></sw-status><sw-taskbar></sw-taskbar><sw-marks></sw-marks>`);
</script>
</body>
</html>
